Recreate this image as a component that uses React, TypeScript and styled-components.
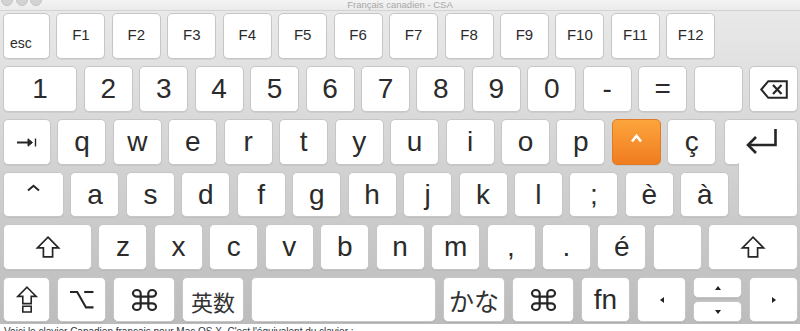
import React from "react";
import styled, { createGlobalStyle, css } from "styled-components";

const GlobalStyle = createGlobalStyle`
  html, body {
    margin: 0;
    padding: 0;
    overflow: hidden;
    background: #ffffff;
  }
  body {
    font-family: "Liberation Sans", Arial, sans-serif;
  }
`;

const KEY_W = 49;
const GAP = 6.45;

const Window = styled.div`
  width: 800px;
  display: flex;
  flex-direction: column;
`;

const TitleBar = styled.div`
  height: 10px;
  overflow: hidden;
  background: linear-gradient(#f3f3f3, #ebebeb);
  border-bottom: 1px solid #d3d3d3;
  display: grid;
  grid-template-columns: 1fr auto 1fr;
  align-items: start;
`;

const Lights = styled.div`
  display: flex;
  gap: 2.5px;
  padding-left: 1px;
  margin-top: -6px;
`;

const Light = styled.span`
  width: 12px;
  height: 12px;
  border-radius: 50%;
  box-sizing: border-box;
  background: #d3d3d3;
  border: 1px solid #c4c4c4;
`;

const Title = styled.div`
  font-size: 9.5px;
  line-height: 9px;
  color: #a8a8a8;
  white-space: nowrap;
`;

const Board = styled.div`
  background: linear-gradient(#e9e9e9, #d4d4d4 45%, #bcbcbc);
  padding: 2px 2px 2px 3px;
  display: flex;
  flex-direction: column;
  gap: 7px;
`;

const Row = styled.div<{ $h: number }>`
  display: flex;
  gap: ${GAP}px;
  height: ${(p) => p.$h}px;
`;

const Key = styled.div<{ $w?: number; $size?: number; $grow?: boolean }>`
  box-sizing: border-box;
  ${(p) =>
    p.$grow
      ? css`
          flex: 1;
        `
      : css`
          width: ${p.$w ?? KEY_W}px;
          flex: none;
        `}
  background: #ffffff;
  border: 1px solid #c6c6c6;
  border-radius: 5px;
  box-shadow: 0 1px 0 rgba(0, 0, 0, 0.06);
  display: flex;
  align-items: center;
  justify-content: center;
  color: #2b2b2b;
  font-size: ${(p) => p.$size ?? 28}px;
  line-height: 1;
`;

const FnKey = styled(Key)`
  font-size: 15px;
  padding-bottom: 4px;
`;

const EscKey = styled(Key)`
  font-size: 14px;
  align-items: flex-end;
  justify-content: flex-start;
  padding: 0 0 8px 6px;
`;

const AccentKey = styled(Key)`
  background: linear-gradient(#fca53d, #f07c1f);
  border-color: #e07a25;
  padding-bottom: 8px;
`;

const RaisedKey = styled(Key)<{ $lift: number }>`
  padding-bottom: ${(p) => p.$lift}px;
`;

const ReturnTop = styled(Key)`
  margin-left: 1.5px;
  border-bottom-right-radius: 0;
  padding-bottom: 2px;
`;

const ReturnBottom = styled(Key)`
  margin-left: 2.5px;
  border-top: none;
  border-top-left-radius: 0;
  border-top-right-radius: 0;
  position: relative;
  &::before {
    content: "";
    position: absolute;
    left: -1px;
    right: -1px;
    top: -9px;
    height: 10px;
    background: #ffffff;
    border-left: 1px solid #c6c6c6;
    border-right: 1px solid #c6c6c6;
  }
`;

const KanaLabel = styled.span<{ $size: number }>`
  font-family: "Noto Sans CJK JP", "Noto Sans CJK SC", sans-serif;
  font-size: ${(p) => p.$size}px;
  color: #333333;
  line-height: 1;
  padding-top: 2px;
`;

const UpDown = styled.div`
  width: ${KEY_W}px;
  display: flex;
  flex-direction: column;
  gap: 3px;
`;

const HalfKey = styled(Key)`
  flex: 1;
  width: 100%;
`;

const Caption = styled.div`
  font-size: 10px;
  line-height: 12px;
  color: #2e3340;
  padding: 2px 4px 0;
  white-space: nowrap;
`;

const Icon = styled.svg`
  display: block;
  overflow: visible;
`;

const stroke = "#262626";

const TabIcon = () => (
  <Icon width="20" height="11" viewBox="0 0 20 11">
    <path d="M0 5.5H14" stroke={stroke} strokeWidth="2" fill="none" />
    <path d="M11 1.8L15.5 5.5L11 9.2Z" fill={stroke} stroke={stroke} strokeWidth="1" strokeLinejoin="round" />
    <path d="M18.5 1.5V9.5" stroke={stroke} strokeWidth="1.4" />
  </Icon>
);

const Caret = ({ color = stroke, w = 13, h = 6, sw = 2 }: { color?: string; w?: number; h?: number; sw?: number }) => (
  <Icon width={w} height={h} viewBox={`0 0 ${w} ${h}`}>
    <path d={`M1 ${h - 0.5}L${w / 2} 0.8L${w - 1} ${h - 0.5}`} stroke={color} strokeWidth={sw} fill="none" />
  </Icon>
);

const ShiftIcon = () => (
  <Icon width="24" height="22" viewBox="0 0 24 22">
    <path d="M12 1.2L22.6 11.8H16.6V20.8H7.4V11.8H1.4Z" stroke={stroke} strokeWidth="1.7" fill="none" strokeLinejoin="miter" />
  </Icon>
);

const KanaLockIcon = () => (
  <Icon width="22" height="27" viewBox="0 0 22 27">
    <path d="M11 1.2L20.2 10.4H15.2V17.6H6.8V10.4H1.8Z" stroke={stroke} strokeWidth="1.6" fill="none" />
    <path d="M6.8 20.2H15.2V26H6.8Z" stroke={stroke} strokeWidth="1.6" fill="none" />
  </Icon>
);

const OptionIcon = () => (
  <Icon width="25" height="19" viewBox="0 0 25 19">
    <path d="M1 2H8.2L17 17.4H24.5" stroke={stroke} strokeWidth="2.1" fill="none" />
    <path d="M15.2 2H24.5" stroke={stroke} strokeWidth="2.1" fill="none" />
  </Icon>
);

const CommandIcon = () => (
  <Icon width="23" height="20" viewBox="3 3 18 18" preserveAspectRatio="none">
    <path
      d="M15 6v12a3 3 0 1 0 3-3H6a3 3 0 1 0 3 3V6a3 3 0 1 0-3 3h12a3 3 0 1 0-3-3"
      stroke={stroke}
      strokeWidth="2.2"
      fill="none"
      vectorEffect="non-scaling-stroke"
    />
  </Icon>
);

const DeleteIcon = () => (
  <Icon width="28" height="19" viewBox="0 0 28 19">
    <path d="M1.3 9.5L8.3 1.2H26.8V17.8H8.3Z" stroke={stroke} strokeWidth="2" fill="none" strokeLinejoin="miter" />
    <path d="M13 5L21.5 14M21.5 5L13 14" stroke={stroke} strokeWidth="2.2" />
  </Icon>
);

const ReturnIcon = () => (
  <Icon width="32" height="26" viewBox="0 0 32 26">
    <path d="M30.5 1V17H3" stroke={stroke} strokeWidth="2.6" fill="none" />
    <path d="M11 9L3 17L11 25" stroke={stroke} strokeWidth="2.6" fill="none" />
  </Icon>
);

const Tri = ({ dir }: { dir: "l" | "r" | "u" | "d" }) => {
  const d = {
    l: "M0 3L4 0V6Z",
    r: "M4 3L0 0V6Z",
    u: "M3 0L6 4H0Z",
    d: "M3 4L6 0H0Z",
  }[dir];
  const horiz = dir === "l" || dir === "r";
  return (
    <Icon width={horiz ? 4 : 6} height={horiz ? 6 : 4} viewBox={horiz ? "0 0 4 6" : "0 0 6 4"}>
      <path d={d} fill="#222222" />
    </Icon>
  );
};

const fnKeys = ["F1", "F2", "F3", "F4", "F5", "F6", "F7", "F8", "F9", "F10", "F11", "F12"];
const numKeys = ["2", "3", "4", "5", "6", "7", "8", "9", "0", "-", "=", ""];
const tabKeys = ["q", "w", "e", "r", "t", "y", "u", "i", "o", "p"];
const capsKeys = ["a", "s", "d", "f", "g", "h", "j", "k", "l", ";", "è", "à"];
const shiftKeys = ["z", "x", "c", "v", "b", "n", "m", ",", ".", "é", ""];

export default function App() {
  return (
    <>
      <GlobalStyle />
      <Window>
        <TitleBar>
          <Lights>
            <Light />
            <Light />
            <Light />
          </Lights>
          <Title>Français canadien - CSA</Title>
          <div />
        </TitleBar>
        <Board>
          <Row $h={46}>
            <EscKey $w={47}>esc</EscKey>
            {fnKeys.map((k) => (
              <FnKey key={k}>{k}</FnKey>
            ))}
          </Row>

          <Row $h={46}>
            <Key $grow>1</Key>
            {numKeys.map((k, i) => (
              <Key key={i}>{k}</Key>
            ))}
            <Key>
              <DeleteIcon />
            </Key>
          </Row>

          <Row $h={46}>
            <Key $w={48}>
              <TabIcon />
            </Key>
            {tabKeys.map((k) => (
              <Key key={k}>{k}</Key>
            ))}
            <AccentKey>
              <Caret color="#ffffff" w={11} h={7} sw={2.6} />
            </AccentKey>
            <Key>ç</Key>
            <ReturnTop $grow>
              <ReturnIcon />
            </ReturnTop>
          </Row>

          <Row $h={45}>
            <RaisedKey $w={61} $lift={14}>
              <Caret />
            </RaisedKey>
            {capsKeys.map((k) => (
              <Key key={k}>{k}</Key>
            ))}
            <ReturnBottom $grow />
          </Row>

          <Row $h={46}>
            <Key $w={89}>
              <ShiftIcon />
            </Key>
            {shiftKeys.map((k, i) => (
              <Key key={i}>{k}</Key>
            ))}
            <Key $grow>
              <ShiftIcon />
            </Key>
          </Row>

          <Row $h={45} style={{ gap: 7 }}>
            <Key $w={47}>
              <KanaLockIcon />
            </Key>
            <Key>
              <OptionIcon />
            </Key>
            <Key $w={62}>
              <CommandIcon />
            </Key>
            <Key $w={62}>
              <KanaLabel $size={22}>英数</KanaLabel>
            </Key>
            <Key $grow />
            <Key $w={62}>
              <KanaLabel $size={25}>かな</KanaLabel>
            </Key>
            <Key $w={62}>
              <CommandIcon />
            </Key>
            <Key>fn</Key>
            <Key>
              <Tri dir="l" />
            </Key>
            <UpDown>
              <HalfKey>
                <Tri dir="u" />
              </HalfKey>
              <HalfKey>
                <Tri dir="d" />
              </HalfKey>
            </UpDown>
            <Key>
              <Tri dir="r" />
            </Key>
          </Row>
        </Board>
        <Caption>Voici le clavier Canadien français pour Mac OS X. C'est l'équivalent du clavier :</Caption>
      </Window>
    </>
  );
}
